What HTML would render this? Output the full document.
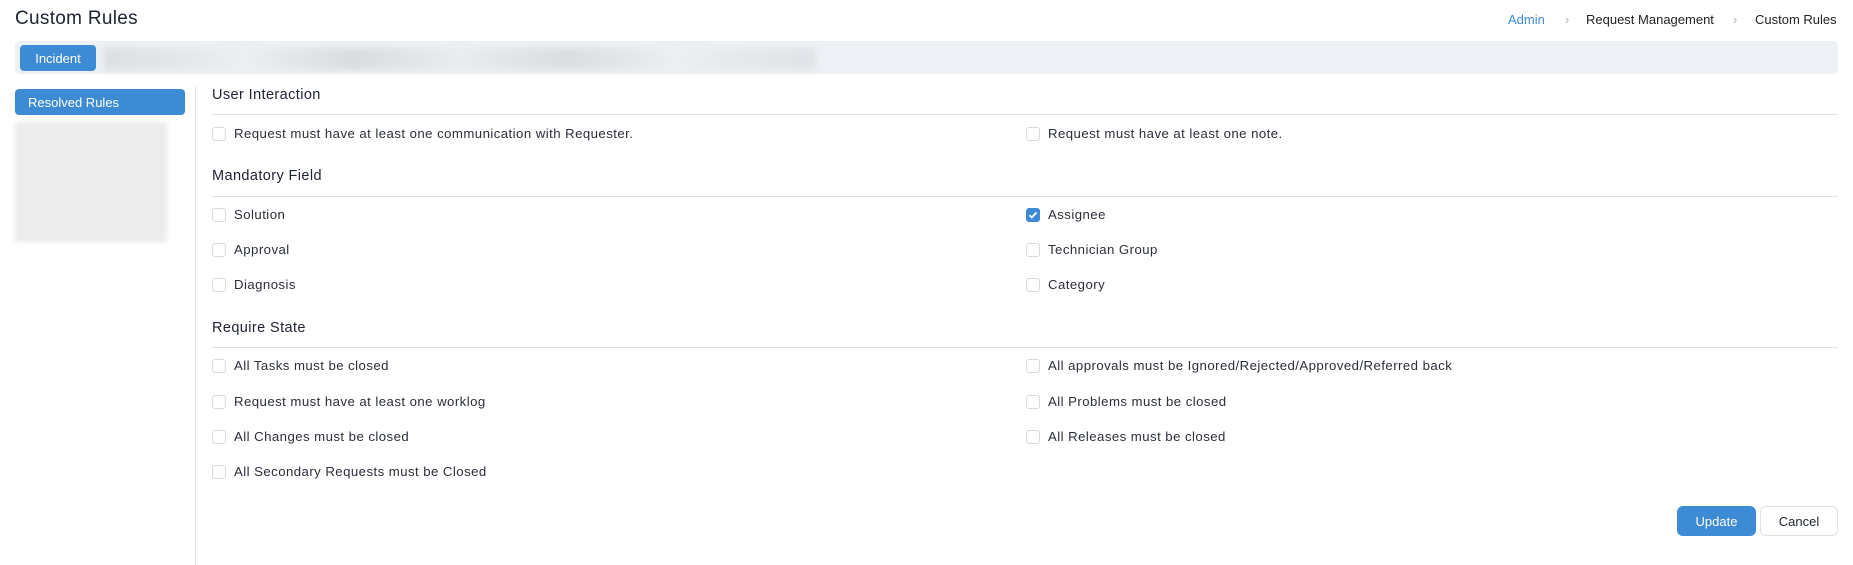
<!DOCTYPE html>
<html><head><style>
*{box-sizing:border-box;margin:0;padding:0}
body{width:1853px;height:565px;background:#fff;font-family:"Liberation Sans",sans-serif;color:#222;position:relative;overflow:hidden}
.a{position:absolute}
.title{left:15px;top:8px;font-size:19px;color:#1d2330;letter-spacing:0.3px}
.bc{top:12px;font-size:13px;color:#222}
.bar{left:15px;top:41px;width:1823px;height:33px;background:#edf0f5;border-radius:5px}
.btn{background:#3d8bd4;color:#fff;border-radius:4px;font-size:13px;display:flex;align-items:center}
.blur{background:linear-gradient(90deg,#dcdfe3,#eceef1 20%,#d9dce0 35%,#eaecef 50%,#dadde1 65%,#eceef1 80%,#e0e3e7);filter:blur(3px)}
.sec{left:212px;font-size:14.5px;color:#1d2330;letter-spacing:0.4px}
.line{left:212px;width:1626px;height:1px;background:#dde2ea}
.row{font-size:13.2px;color:#2a2f3a;display:flex;align-items:center;letter-spacing:0.45px}
.cb{width:14px;height:14px;border:1px solid #d5dae3;border-radius:3px;margin-right:8px;background:#fff}
.ck{background:#3d8bd4;border-color:#3d8bd4;position:relative}
</style></head><body>
<div class="a title">Custom Rules</div>
<div class="a bc" style="left:1508px;color:#3d8bd4">Admin</div>
<div class="a bc" style="left:1565px;color:#aaa">›</div>
<div class="a bc" style="left:1586px">Request Management</div>
<div class="a bc" style="left:1733px;color:#aaa">›</div>
<div class="a bc" style="left:1755px">Custom Rules</div>
<div class="a bar"></div>
<div class="a btn" style="left:20px;top:45px;width:76px;height:26px;justify-content:center">Incident</div>
<div class="a blur" style="left:104px;top:48px;width:712px;height:22px"></div>
<div class="a btn" style="left:15px;top:89px;width:170px;height:26px;padding-left:13px">Resolved Rules</div>
<div class="a" style="left:15px;top:122px;width:152px;height:120px;background:#ececec;filter:blur(2px)"></div>
<div class="a" style="left:195px;top:86px;width:1px;height:479px;background:#e3e6eb"></div>

<div class="a sec" style="top:87px">User Interaction</div>
<div class="a line" style="top:114px"></div>
<div class="a row" style="left:212px;top:126px"><span class="cb"></span>Request must have at least one communication with Requester.</div>
<div class="a row" style="left:1026px;top:126px"><span class="cb"></span>Request must have at least one note.</div>

<div class="a sec" style="top:168px">Mandatory Field</div>
<div class="a line" style="top:196px"></div>
<div class="a row" style="left:212px;top:207px"><span class="cb"></span>Solution</div>
<div class="a row" style="left:1026px;top:207px"><span class="cb ck"><svg width="14" height="14" viewBox="0 0 14 14" style="position:absolute;left:-1px;top:-1px"><path d="M3.5 7.2l2.3 2.3 4.7-5" stroke="#fff" stroke-width="1.8" fill="none"/></svg></span>Assignee</div>
<div class="a row" style="left:212px;top:242px"><span class="cb"></span>Approval</div>
<div class="a row" style="left:1026px;top:242px"><span class="cb"></span>Technician Group</div>
<div class="a row" style="left:212px;top:277px"><span class="cb"></span>Diagnosis</div>
<div class="a row" style="left:1026px;top:277px"><span class="cb"></span>Category</div>

<div class="a sec" style="top:320px">Require State</div>
<div class="a line" style="top:347px"></div>
<div class="a row" style="left:212px;top:358px"><span class="cb"></span>All Tasks must be closed</div>
<div class="a row" style="left:1026px;top:358px"><span class="cb"></span>All approvals must be Ignored/Rejected/Approved/Referred back</div>
<div class="a row" style="left:212px;top:394px"><span class="cb"></span>Request must have at least one worklog</div>
<div class="a row" style="left:1026px;top:394px"><span class="cb"></span>All Problems must be closed</div>
<div class="a row" style="left:212px;top:429px"><span class="cb"></span>All Changes must be closed</div>
<div class="a row" style="left:1026px;top:429px"><span class="cb"></span>All Releases must be closed</div>
<div class="a row" style="left:212px;top:464px"><span class="cb"></span>All Secondary Requests must be Closed</div>

<div class="a btn" style="left:1677px;top:506px;width:79px;height:30px;justify-content:center;border-radius:6px">Update</div>
<div class="a" style="left:1760px;top:506px;width:78px;height:30px;border:1px solid #dde2ea;border-radius:6px;font-size:13px;display:flex;align-items:center;justify-content:center;color:#1d2330">Cancel</div>
</body></html>
